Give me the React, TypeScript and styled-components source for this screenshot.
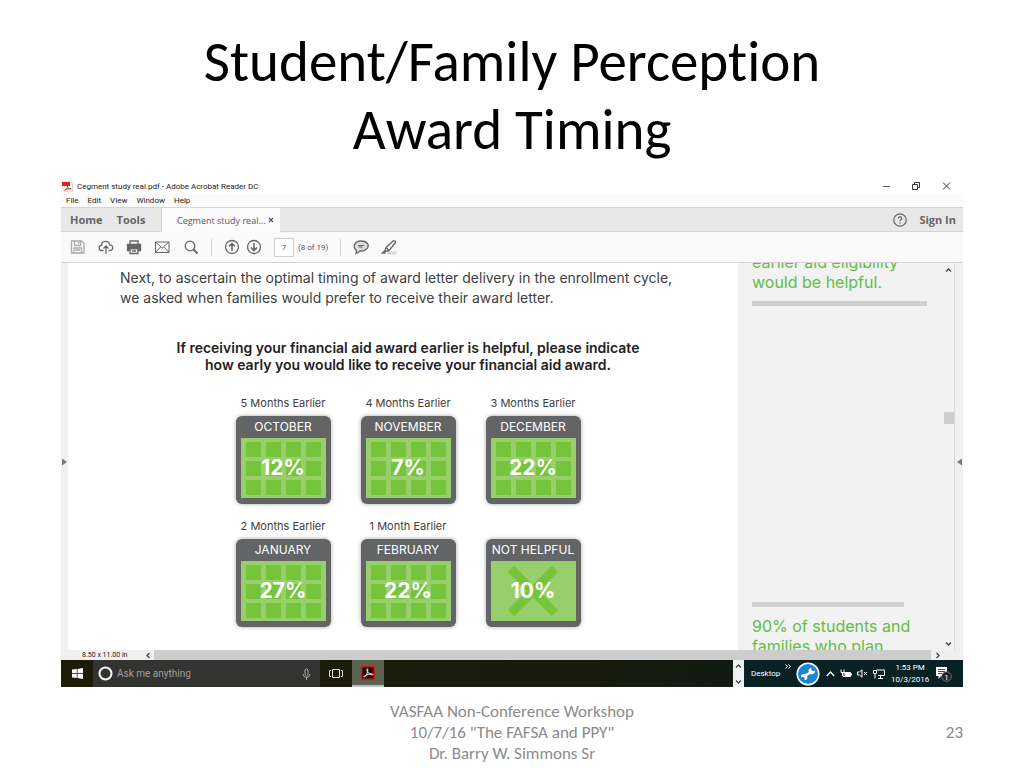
import React from "react";
import styled, { createGlobalStyle, css } from "styled-components";

const GlobalStyle = createGlobalStyle`
  *, *::before, *::after { box-sizing: border-box; }
  body { margin: 0; background: #ffffff; }
  h1, h2, p, figure { margin: 0; }
  button, input { font: inherit; color: inherit; border: 0; padding: 0; margin: 0; background: none; }
  svg { display: block; flex: none; }
`;

const slideFont = `Carlito, Lato, sans-serif`;
const uiFont = `"Open Sans", "Noto Sans", sans-serif`;
const smallFont = `Roboto, "Open Sans", sans-serif`;
const pageFont = `Inter, Lato, sans-serif`;

/* ---------- slide ---------- */

const Slide = styled.main`
  min-height: 100vh;
  display: flex;
  flex-direction: column;
  padding: 28px 61px 4px;
  font-family: ${slideFont};
  font-variant-ligatures: none;
`;

const SlideTitle = styled.h1`
  font-size: 57px;
  line-height: 68px;
  font-weight: 400;
  text-align: center;
  color: #000;
`;

const SlideFooter = styled.footer`
  display: grid;
  grid-template-columns: 1fr auto 1fr;
  align-items: center;
  margin-top: 14px;
  font-size: 17px;
  line-height: 21px;
  color: #8b8b8b;
  text-align: center;
`;

const SlideNumber = styled.span`
  grid-column: 3;
  text-align: right;
`;

const FooterText = styled.p`
  grid-column: 2;
`;

/* ---------- reader window ---------- */

const ReaderWindow = styled.section`
  display: flex;
  flex-direction: column;
  margin-top: 14px;
  background: #fff;
  font-family: ${smallFont};
`;

const TitleBar = styled.header`
  display: flex;
  align-items: center;
  height: 16px;
  padding: 0 12px 0 1px;
  gap: 4px;
  font-size: 8px;
  color: #222;
`;

const WindowTitle = styled.span`
  flex: 1;
`;

const WindowButtons = styled.div`
  display: flex;
  gap: 20px;
`;

const IconButton = styled.button`
  display: grid;
  place-items: center;
  flex: none;
`;

const MenuBar = styled.nav`
  display: flex;
  align-items: center;
  gap: 9px;
  height: 13px;
  padding-left: 5px;
  background: #fbfbfb;
  font-size: 8px;
  color: #222;
`;

const TabBar = styled.div`
  display: flex;
  align-items: stretch;
  height: 25px;
  background: #e8e8e8;
  border-top: 1px solid #d5d5d5;
  border-bottom: 1px solid #d5d5d5;
  font-family: ${uiFont};
`;

const MainTabs = styled.div`
  display: flex;
  gap: 14px;
  width: 101px;
  padding-left: 9px;
  border-right: 1px solid #d0d0d0;
  font-size: 11px;
  font-weight: 700;
  color: #666;
`;

const DocumentTab = styled.div`
  display: flex;
  align-items: center;
  justify-content: space-between;
  width: 118px;
  margin-bottom: -1px;
  padding: 0 6px 0 15px;
  background: #fbfbfb;
  font-size: 9px;
  color: #5a5a5a;
`;

const Account = styled.div`
  display: flex;
  align-items: center;
  gap: 12px;
  margin-left: auto;
  padding-right: 7px;
  font-size: 11px;
  font-weight: 700;
  color: #666;
`;

const Toolbar = styled.div`
  display: flex;
  align-items: center;
  height: 31px;
  padding-left: 9px;
  background: #fafafa;
  border-bottom: 1px solid #d2d2d2;
  color: #666;
`;

const ToolGroup = styled.div<{ $gap: number }>`
  display: flex;
  align-items: center;
  gap: ${(p) => p.$gap}px;
`;

const Divider = styled.span`
  width: 1px;
  height: 17px;
  margin: 0 12px;
  background: #d6d6d6;
`;

const PageField = styled.label`
  display: flex;
  align-items: center;
  gap: 4px;
  margin-left: 12px;
  font-size: 8px;
  color: #555;

  input {
    width: 20px;
    height: 19px;
    border: 1px solid #cfcfcf;
    background: #fff;
    text-align: center;
  }
`;

/* ---------- document area ---------- */

const Workspace = styled.div`
  display: grid;
  grid-template-columns: 7px minmax(0, 1fr) 8px;
`;

const PaneHandle = styled.button`
  display: grid;
  place-items: center;
  background: #f0f0f0;
`;

const Viewer = styled.div`
  display: grid;
  grid-template-columns: minmax(0, 1fr) 205px 12px;
  grid-template-rows: 387px 10px;
`;

const Page = styled.article`
  padding: 5px 0 0 52px;
  overflow: hidden;
  font-family: ${pageFont};
  color: #404040;
`;

const Intro = styled.p`
  font-size: 14px;
  line-height: 20px;
`;

const Survey = styled.section`
  margin: 31px 42px 0 0;
  text-align: center;
`;

const Question = styled.h2`
  font-size: 14px;
  line-height: 17px;
  font-weight: 600;
  color: #222;
`;

const Months = styled.div`
  display: grid;
  grid-template-columns: repeat(3, 95px);
  justify-content: center;
  gap: 13px 30px;
  margin-top: 21px;
`;

const Month = styled.figure`
  display: flex;
  flex-direction: column;
`;

const Caption = styled.figcaption`
  height: 22px;
  line-height: 18px;
  font-size: 11px;
  white-space: nowrap;
`;

const Calendar = styled.div`
  display: flex;
  flex-direction: column;
  height: 88px;
  padding: 0 5px 6px;
  border-radius: 6px;
  background: #636466;
  box-shadow: 0 0 4px rgba(0, 0, 0, 0.35);
`;

const MonthName = styled.span`
  display: flex;
  justify-content: center;
  font-size: 12px;
  line-height: 22px;
  color: #fff;
  white-space: nowrap;
`;

const Sheet = styled.div`
  display: grid;
  flex: 1;
  place-items: center;
  background: #97d06b;
`;

const stacked = css`
  grid-area: 1 / 1;
`;

const Days = styled.div`
  ${stacked}
  display: grid;
  grid-template: repeat(3, 15px) / repeat(4, 15px);
  gap: 4px 5px;
`;

const Day = styled.i`
  background: #76c43c;
`;

const Cross = styled.svg`
  ${stacked}
`;

const Percent = styled.strong`
  ${stacked}
  z-index: 1;
  font-size: 21px;
  line-height: 24px;
  font-weight: 700;
  color: #fff;
`;

const Sidebar = styled.aside`
  display: flex;
  flex-direction: column;
  overflow: hidden;
  padding-left: 14px;
  background: #f2f2f2;
  font-family: ${pageFont};
  font-size: 16px;
  line-height: 20px;
  color: #63bd45;
  white-space: nowrap;
`;

const ScrolledTop = styled.p`
  margin-top: -11px;
`;

const ScrolledBottom = styled.p`
  margin: 9px 0 -6px;
`;

const Rule = styled.hr<{ $width: number; $push?: boolean }>`
  width: ${(p) => p.$width}px;
  height: 5px;
  flex: none;
  border: 0;
  margin: ${(p) => (p.$push ? "auto 0 0" : "9px 0 0")};
  background: #d0d0d0;
`;

const VScroll = styled.div`
  display: flex;
  flex-direction: column;
  align-items: center;
  padding: 4px 0 3px;
  background: #f2f2f2;
  border-right: 1px solid #d8d8d8;
`;

const Track = styled.span<{ $share: number }>`
  flex: ${(p) => p.$share};
`;

const Thumb = styled.span`
  width: 10px;
  height: 12px;
  background: #cdcdcd;
`;

const StatusRow = styled.div`
  grid-column: 1 / -1;
  display: flex;
  align-items: center;
  padding-left: 14px;
  background: #f0f0f0;
  font-size: 7px;
  line-height: 10px;
  color: #222;
`;

const HTrack = styled.span`
  flex: 1;
  align-self: stretch;
  background: #cdcdcd;
`;

const ScrollEnd = styled.button`
  display: grid;
  place-items: center;
  width: 12px;
`;

const PageSize = styled.span`
  width: 60px;
`;

const ScrollCorner = styled.span`
  width: 12px;
`;

/* ---------- taskbar ---------- */

const Taskbar = styled.div`
  display: flex;
  height: 27px;
  background: linear-gradient(90deg, #1d1c08, #181b0e 60%, #061c1a);
  color: #fff;
  font-family: ${smallFont};
`;

const TaskButton = styled.button<{ $width: number; $active?: boolean }>`
  display: grid;
  place-items: center;
  width: ${(p) => p.$width}px;
  background: ${(p) => (p.$active ? "#5c6150" : "transparent")};
  border-bottom: ${(p) => (p.$active ? "2px solid #a9c6c9" : "0")};
`;

const SearchBox = styled.label`
  display: flex;
  align-items: center;
  gap: 4px;
  width: 227px;
  padding: 0 9px 0 5px;
  background: #333331;

  input {
    flex: 1;
    min-width: 0;
    font-size: 10px;
    outline: 0;
  }
  input::placeholder { color: #a0a0a0; opacity: 1; }
`;

const Spinner = styled.div`
  display: flex;
  flex-direction: column;
  justify-content: space-between;
  align-items: center;
  width: 11px;
  margin-left: auto;
  padding: 3px 0 2px;
  background: #f0f0f0;
`;

const Tray = styled.div`
  display: flex;
  align-items: center;
  width: 219px;
  padding: 0 11px 0 7px;
  background: #0a2124;
  font-size: 8px;
`;

const TrayIcons = styled.div`
  display: flex;
  align-items: center;
  gap: 5px;
  margin-left: 6px;
`;

const More = styled.span`
  align-self: flex-start;
  margin: 4px 5px 0;
`;

const Clock = styled.time`
  margin: 0 auto;
  line-height: 12px;
  text-align: center;
`;

/* ---------- icons ---------- */

type Dir = "up" | "down" | "left" | "right";
const chevrons: Record<Dir, string> = {
  up: "M1 4.5 3.500 2 6 4.5",
  down: "M1 2.500 3.500 5 6 2.500",
  left: "M4.500 1 2 3.500 4.500 6",
  right: "M2.500 1 5 3.500 2.500 6",
};
const Chevron = ({ dir }: { dir: Dir }) => (
  <svg width="7" height="7" viewBox="0 0 7 7" fill="none" stroke="#444" strokeWidth="1.3">
    <path d={chevrons[dir]} />
  </svg>
);

const Tool = ({ label, size = 16, children }: { label: string; size?: number; children: React.ReactNode }) => (
  <IconButton aria-label={label}>
    <svg width={size} height="16" viewBox={`0 0 ${size} 16`} fill="none" stroke="currentColor" strokeWidth="1.3">
      {children}
    </svg>
  </IconButton>
);

/* ---------- data ---------- */

const months = [
  { caption: "5 Months Earlier", name: "OCTOBER", value: "12%" },
  { caption: "4 Months Earlier", name: "NOVEMBER", value: "7%" },
  { caption: "3 Months Earlier", name: "DECEMBER", value: "22%" },
  { caption: "2 Months Earlier", name: "JANUARY", value: "27%" },
  { caption: "1 Month Earlier", name: "FEBRUARY", value: "22%" },
  { caption: "", name: "NOT HELPFUL", value: "10%" },
];

const dayCells = Array.from({ length: 12 }, (_, i) => i);

export default function App() {
  return (
    <>
      <GlobalStyle />
      <Slide>
        <SlideTitle>
          Student/Family Perception
          <br />
          Award Timing
        </SlideTitle>

        <ReaderWindow>
          <TitleBar>
            <svg width="11" height="11" viewBox="0 0 11 11">
              <path d="M2 0h6l2.500 2.500V11H2Z" fill="#f4f4f4" stroke="#c9b6b6" strokeWidth=".6" />
              <path d="M0 1h8v4H0Z" fill="#d8281c" />
              <path d="M2.500 9.500C5 8 6 5.500 5.500 3.500M5 5.500C6 7.500 7.500 8 9.500 8M3 8.800c2-1 4-1.300 6-1" fill="none" stroke="#d8281c" strokeWidth=".8" />
            </svg>
            <WindowTitle>Cegment study real.pdf - Adobe Acrobat Reader DC</WindowTitle>
            <WindowButtons>
              <IconButton aria-label="Minimize">
                <svg width="10" height="10" stroke="#555"><path d="M2 5.500h7" /></svg>
              </IconButton>
              <IconButton aria-label="Restore">
                <svg width="10" height="10" fill="none" stroke="#333"><path d="M1.500 3.500h5v5h-5ZM3.500 3V1.500h5v5H7" /></svg>
              </IconButton>
              <IconButton aria-label="Close">
                <svg width="10" height="10" stroke="#333"><path d="M2 1.500l7 7M9 1.500l-7 7" /></svg>
              </IconButton>
            </WindowButtons>
          </TitleBar>

          <MenuBar>
            {["File", "Edit", "View", "Window", "Help"].map((m) => (
              <button key={m}>{m}</button>
            ))}
          </MenuBar>

          <TabBar>
            <MainTabs>
              <button>Home</button>
              <button>Tools</button>
            </MainTabs>
            <DocumentTab>
              <span>Cegment study real...</span>
              <IconButton aria-label="Close tab">
                <svg width="6" height="6" stroke="#555" strokeWidth="1.200"><path d="M1 1l4 4M5 1 1 5" /></svg>
              </IconButton>
            </DocumentTab>
            <Account>
              <IconButton aria-label="Help">
                <svg width="14" height="14" viewBox="0 0 14 14" fill="none" stroke="#666" strokeWidth="1.200">
                  <circle cx="7" cy="7" r="6.200" />
                  <path d="M5.200 5.600C5.200 3.200 8.800 3.300 8.800 5.400 8.800 6.800 7 6.700 7 8.300M7 9.500v1.300" />
                </svg>
              </IconButton>
              <button>Sign In</button>
            </Account>
          </TabBar>

          <Toolbar>
            <ToolGroup $gap={12}>
              <Tool label="Save">
                <g stroke="#aaa">
                  <path d="M1.500 2h10l2.500 2.500V14H1.500Z" />
                  <path d="M4.500 2v4.500h6V2M8.500 3v2M4 14V9h7.500v5M5.500 11H10" />
                </g>
              </Tool>
              <Tool label="Upload">
                <path d="M5.500 11.500H4c-3.800 0-3.800-5-.4-5.200C3.500 1.500 10.800 1 11.700 5.800c4-.2 4 5.700.3 5.700h-1.500M8 15V7M5.500 9.500 8 7l2.500 2.500" />
              </Tool>
              <Tool label="Print">
                <path d="M1.500 5.500h13v6h-2v-2h-9v2h-2Z" fill="currentColor" />
                <path d="M4 5V2h8v3M4 9.500h8v5H4ZM6 12h4" />
              </Tool>
              <Tool label="Email" size={17}>
                <path d="M1.500 3h13.500v10.500H1.500ZM1.500 3l6.750 6L15 3M1.500 13.500l5-5.500M15 13.500l-5-5.500" strokeWidth="1" />
              </Tool>
              <Tool label="Search">
                <circle cx="7" cy="7" r="4.800" />
                <path d="M10.500 10.500l4 4" strokeWidth="2" />
              </Tool>
            </ToolGroup>
            <Divider />
            <ToolGroup $gap={6}>
              <Tool label="Previous page">
                <circle cx="8" cy="8" r="6.500" />
                <path d="M8 12V4.500M5 7.500l3-3 3 3" strokeWidth="1.600" />
              </Tool>
              <Tool label="Next page">
                <circle cx="8" cy="8" r="6.500" />
                <path d="M8 4v7.500M5 8.500l3 3 3-3" strokeWidth="1.600" />
              </Tool>
            </ToolGroup>
            <PageField>
              <input aria-label="Page number" defaultValue="7" />
              <span>(8 of 19)</span>
            </PageField>
            <Divider />
            <ToolGroup $gap={12}>
              <Tool label="Comment">
                <path d="M3.500 11.500C-1 8 1.500 2 8 2s9.500 5 5 8.500C11.500 12 9 12.200 7.500 12L3 14.500Z" fill="#ddd" />
                <path d="M5 6.500h6M5.500 8h4" strokeWidth="1" />
              </Tool>
              <Tool label="Highlight">
                <path d="M6 14h9.500" stroke="#d8d8d8" strokeWidth="3" />
                <path d="M5 8.500 12 2c1.500-1 3.200.5 2.200 2L8 11.500ZM5 8.500l-1 3 1 .8L8 11.500M3.500 12 1.500 14H4Z" />
              </Tool>
            </ToolGroup>
          </Toolbar>

          <Workspace>
            <PaneHandle aria-label="Show navigation pane">
              <svg width="5" height="8"><path d="M0 0.500 5 4 0 7.500Z" fill="#777" /></svg>
            </PaneHandle>
            <Viewer>
              <Page>
                <Intro>
                  Next, to ascertain the optimal timing of award letter delivery in the enrollment cycle,
                  <br />
                  we asked when families would prefer to receive their award letter.
                </Intro>
                <Survey>
                  <Question>
                    If receiving your financial aid award earlier is helpful, please indicate
                    <br />
                    how early you would like to receive your financial aid award.
                  </Question>
                  <Months>
                    {months.map((m) => (
                      <Month key={m.name}>
                        <Caption>{m.caption}</Caption>
                        <Calendar>
                          <MonthName>{m.name}</MonthName>
                          <Sheet>
                            {m.caption ? (
                              <Days>
                                {dayCells.map((d) => (
                                  <Day key={d} />
                                ))}
                              </Days>
                            ) : (
                              <Cross width="50" height="50" viewBox="0 0 50 50" stroke="#76c43c" strokeWidth="9">
                                <path d="M3 3 47 47M47 3 3 47" />
                              </Cross>
                            )}
                            <Percent>{m.value}</Percent>
                          </Sheet>
                        </Calendar>
                      </Month>
                    ))}
                  </Months>
                </Survey>
              </Page>
              <Sidebar>
                <ScrolledTop>
                  earlier aid eligibility
                  <br />
                  would be helpful.
                </ScrolledTop>
                <Rule $width={175} />
                <Rule $width={152} $push />
                <ScrolledBottom>
                  90% of students and
                  <br />
                  families who plan
                </ScrolledBottom>
              </Sidebar>
              <VScroll>
                <IconButton aria-label="Scroll up"><Chevron dir="up" /></IconButton>
                <Track $share={138} />
                <Thumb />
                <Track $share={217} />
                <IconButton aria-label="Scroll down"><Chevron dir="down" /></IconButton>
              </VScroll>
              <StatusRow>
                <PageSize>8.50 x 11.00 in</PageSize>
                <ScrollEnd aria-label="Scroll left"><Chevron dir="left" /></ScrollEnd>
                <HTrack />
                <ScrollEnd aria-label="Scroll right"><Chevron dir="right" /></ScrollEnd>
                <ScrollCorner />
              </StatusRow>
            </Viewer>
            <PaneHandle aria-label="Show tools pane">
              <svg width="5" height="8"><path d="M5 0.500 0 4 5 7.500Z" fill="#777" /></svg>
            </PaneHandle>
          </Workspace>

          <Taskbar>
            <TaskButton $width={32} aria-label="Start">
              <svg width="11" height="11" fill="#fff"><path d="M0 1.600 4.800 1v4.200H0ZM5.500.9 11 0v5.200H5.500ZM0 5.900h4.800V10L0 9.400ZM5.500 5.900H11V11l-5.500-.9Z" /></svg>
            </TaskButton>
            <SearchBox>
              <svg width="15" height="15" fill="none" stroke="#fff" strokeWidth="2"><circle cx="7.500" cy="7.500" r="6" /></svg>
              <input placeholder="Ask me anything" aria-label="Ask me anything" />
              <svg width="9" height="12" fill="none" stroke="#aaa"><path d="M3 2Q4.500-.5 6 2v4.500Q4.500 9 3 6.500ZM1 6Q1.500 9.500 4.500 9.500T8 6M4.500 9.500V12" /></svg>
            </SearchBox>
            <TaskButton $width={32} aria-label="Task view">
              <svg width="14" height="9" fill="none" stroke="#ddd"><path d="M3.500.500h7v8h-7ZM2 1.500H.500v6H2M12 1.500h1.500v6H12" /></svg>
            </TaskButton>
            <TaskButton $width={32} $active aria-label="Acrobat Reader">
              <svg width="14" height="14" viewBox="0 0 14 14">
                <path d="M.8.8h12.400v12.400H.8Z" fill="#2c0606" stroke="#d3160f" strokeWidth="1.300" />
                <path
                  d="M3.500 11C5.500 9.500 7 6 6.800 3.500c-.1-1-1.200-.9-1 .3C6.200 6 8.500 8.600 11 9c1.300.1 1.200-1.200 0-1.200C8.500 7.800 5.500 8.700 3.500 10c-1 .8-.7 1.600 0 1Z"
                  fill="none"
                  stroke="#fff"
                  strokeWidth="0.9"
                />
              </svg>
            </TaskButton>
            <Spinner>
              <Chevron dir="up" />
              <Chevron dir="down" />
            </Spinner>
            <Tray>
              <span>Desktop</span>
              <More>
                <svg width="6" height="5" fill="none" stroke="#fff"><path d="M.500.500l2 2-2 2M3.500.500l2 2-2 2" /></svg>
              </More>
              <IconButton aria-label="Support">
                <svg width="24" height="24" viewBox="0 0 24 24">
                  <circle cx="12" cy="12" r="10.800" fill="#1a86cf" stroke="#fff" strokeWidth="1.500" />
                  <path d="M8 14.500l8-5" stroke="#fff" strokeWidth="2.600" />
                  <path d="M18.900 8.600a3.200 3.200 0 1 1-3.300-2.700L15.200 8l1.800 1.300ZM5.100 15.400a3.200 3.200 0 1 1 3.300 2.700L8.800 16 7 14.700Z" fill="#fff" />
                </svg>
              </IconButton>
              <TrayIcons>
                <svg width="9" height="6" fill="none" stroke="#fff" strokeWidth="1.200"><path d="M.800 5 4.500 1l3.700 4" /></svg>
                <svg width="12" height="9" fill="none" stroke="#fff"><path d="M3 3.500h7.500v4H3ZM11.500 4.500v2M1 .500v3h3v-3M2.500 3v4" /><path d="M5 4h5v3H5Z" fill="#fff" /></svg>
                <svg width="11" height="9" fill="none" stroke="#fff"><path d="M.500 3h2L5 .800v7.400L2.500 6h-2ZM7 3l3 3M10 3 7 6" /></svg>
                <svg width="12" height="10" fill="none" stroke="#fff"><path d="M3.500 1h8v5.500H5M7.500 6.500v2.500M5 9.500h5M.500 1.500h3v3h-3ZM2 4.500v5" /></svg>
              </TrayIcons>
              <Clock>
                1:53 PM
                <br />
                10/3/2016
              </Clock>
              <IconButton aria-label="Notifications">
                <svg width="17" height="19" viewBox="0 0 17 19">
                  <path d="M1 3h11v9H6l-2.500 3v-3H1Z" fill="#fff" />
                  <path d="M3 5.500h7M3 7.500h7M3 9.500h4" stroke="#0a2124" strokeWidth=".8" />
                  <circle cx="11.500" cy="12.500" r="4.800" fill="#222" stroke="#888" strokeWidth=".8" />
                  <text x="11.500" y="15.500" fontSize="8" textAnchor="middle" fill="#fff">1</text>
                </svg>
              </IconButton>
            </Tray>
          </Taskbar>
        </ReaderWindow>

        <SlideFooter>
          <FooterText>
            VASFAA Non-Conference Workshop
            <br />
            10/7/16 "The FAFSA and PPY"
            <br />
            Dr. Barry W. Simmons Sr
          </FooterText>
          <SlideNumber>23</SlideNumber>
        </SlideFooter>
      </Slide>
    </>
  );
}
